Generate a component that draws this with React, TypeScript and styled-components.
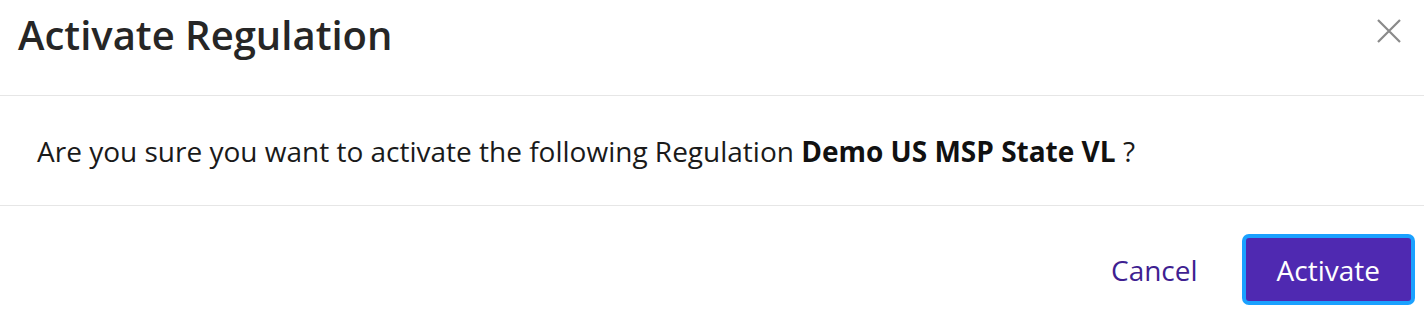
import React from "react";
import styled, { createGlobalStyle } from "styled-components";

const GlobalStyle = createGlobalStyle`
  html, body {
    margin: 0;
    padding: 0;
    background: #ffffff;
  }
  body {
    font-family: "Open Sans", "Liberation Sans", sans-serif;
  }
`;

const Dialog = styled.div`
  width: 1424px;
  height: 312px;
  background: #ffffff;
  display: flex;
  flex-direction: column;
`;

const Header = styled.div`
  height: 96px;
  box-sizing: border-box;
  padding: 7px 23px 0 18px;
  border-bottom: 1px solid #e6e6e6;
  display: flex;
  align-items: flex-start;
  justify-content: space-between;
`;

const Title = styled.h2`
  margin: 0;
  font-size: 40px;
  font-weight: 600;
  color: #262626;
`;

const CloseButton = styled.button`
  width: 24px;
  height: 24px;
  margin-top: 12px;
  padding: 0;
  border: none;
  background: transparent;
  display: flex;
  align-items: center;
  justify-content: center;
  cursor: pointer;
`;

const Body = styled.div`
  height: 110px;
  box-sizing: border-box;
  padding: 36px 37px 0;
  border-bottom: 1px solid #e6e6e6;
`;

const Message = styled.p`
  margin: 0;
  font-size: 28px;
  color: #1a1a1a;
  b {
    font-weight: 700;
    color: #111111;
  }
`;

const Footer = styled.div`
  flex: 1;
  display: flex;
  align-items: flex-start;
  justify-content: flex-end;
  padding: 32px 13px 0 0;
  gap: 48px;
`;

const FooterButton = styled.button<{ $primary?: boolean }>`
  font-family: "Open Sans", "Liberation Sans", sans-serif;
  font-size: 28px;
  height: 63px;
  padding-top: 2px;
  border: none;
  cursor: pointer;
  border-radius: ${({ $primary }) => ($primary ? "3px" : "0")};
  padding-left: ${({ $primary }) => ($primary ? "31px" : "0")};
  padding-right: ${({ $primary }) => ($primary ? "31px" : "0")};
  color: ${({ $primary }) => ($primary ? "#ffffff" : "#3f1f91")};
  background: ${({ $primary }) => ($primary ? "#4f29b1" : "transparent")};
  box-shadow: ${({ $primary }) => ($primary ? "0 0 0 4px #1aa1ff" : "none")};
`;

export default function App() {
  return (
    <>
      <GlobalStyle />
      <Dialog>
        <Header>
          <Title>Activate Regulation</Title>
          <CloseButton aria-label="Close">
            <svg width="24" height="24" viewBox="0 0 24 24">
              <path
                d="M1 1 L23 23 M23 1 L1 23"
                stroke="#8a8a8a"
                strokeWidth="2.2"
                fill="none"
              />
            </svg>
          </CloseButton>
        </Header>
        <Body>
          <Message>
            Are you sure you want to activate the following Regulation{" "}
            <b>Demo US MSP State VL</b> ?
          </Message>
        </Body>
        <Footer>
          <FooterButton>Cancel</FooterButton>
          <FooterButton $primary>Activate</FooterButton>
        </Footer>
      </Dialog>
    </>
  );
}
